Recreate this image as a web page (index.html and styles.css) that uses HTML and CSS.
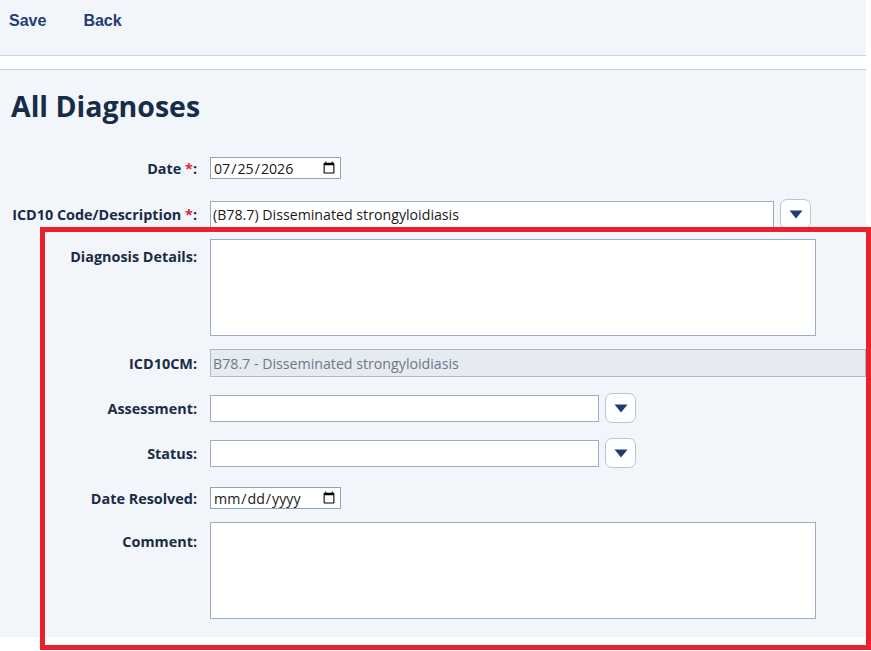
FILE: index.html
```html
<!DOCTYPE html>
<html lang="en">
<head>
    <meta charset="UTF-8">
    <meta name="viewport" content="width=device-width, initial-scale=1.0">
    <title>All Diagnoses</title>
    <link rel="stylesheet" href="styles.css">
</head>
<body>
    <div class="page">
        <div class="toolbar">
            <a class="tool-link" href="#">Save</a>
            <a class="tool-link" href="#">Back</a>
        </div>
        <div class="strip"></div>
        <div class="content">
            <h1 class="title">All Diagnoses</h1>
            <div class="form">
                <div class="row row-date">
                    <label class="label">Date <span class="req">*</span>:</label>
                    <input class="date-input" type="date" value="2026-07-25">
                </div>
                <div class="row row-code">
                    <label class="label">ICD10 Code/Description <span class="req">*</span>:</label>
                    <input class="text-input code-input" type="text" value="(B78.7) Disseminated strongyloidiasis">
                    <button class="drop-btn"><svg width="14" height="9" viewBox="0 0 14 9"><path d="M0.5 0.5 H13.5 L7 8.5 Z" fill="#1f3c73"/></svg></button>
                </div>
                <div class="row row-details">
                    <label class="label label-top">Diagnosis Details:</label>
                    <textarea class="text-area"></textarea>
                </div>
                <div class="row row-icd">
                    <label class="label">ICD10CM:</label>
                    <input class="text-input icd-input" type="text" value="B78.7 - Disseminated strongyloidiasis" disabled>
                </div>
                <div class="row row-assess">
                    <label class="label">Assessment:</label>
                    <input class="text-input short-input" type="text">
                    <button class="drop-btn"><svg width="14" height="9" viewBox="0 0 14 9"><path d="M0.5 0.5 H13.5 L7 8.5 Z" fill="#1f3c73"/></svg></button>
                </div>
                <div class="row row-status">
                    <label class="label">Status:</label>
                    <input class="text-input short-input" type="text">
                    <button class="drop-btn"><svg width="14" height="9" viewBox="0 0 14 9"><path d="M0.5 0.5 H13.5 L7 8.5 Z" fill="#1f3c73"/></svg></button>
                </div>
                <div class="row row-resolved">
                    <label class="label">Date Resolved:</label>
                    <input class="date-input" type="date">
                </div>
                <div class="row row-comment">
                    <label class="label label-top">Comment:</label>
                    <textarea class="text-area"></textarea>
                </div>
            </div>
        </div>
    </div>
    <!-- highlight frame around the detail fields -->
    <div class="highlight"></div>
</body>
</html>
```

FILE: styles.css
```css
*{
    margin: 0px;
    padding: 0px;
    box-sizing: border-box;
}
body{
    background: #ffffff;
    font-family: "Open Sans", "Noto Sans", sans-serif;
    color: #1a2b44;
}
.page{
    width: 866px;
}
.toolbar{
    height: 56px;
    background: #f2f6fb;
    border-bottom: 1px solid #c9d3de;
    display: flex;
    gap: 37px;
    padding: 12px 0px 0px 9px;
}
.tool-link{
    font-family: "Liberation Sans", Arial, sans-serif;
    font-weight: bold;
    font-size: 16px;
    color: #1f3d78;
    text-decoration: none;
}
.strip{
    height: 14px;
    background: #ffffff;
    border-bottom: 1px solid #c9d3de;
}
.content{
    background: #f2f6fb;
    height: 567px;
    padding-top: 18px;
}
.title{
    font-size: 28.5px;
    font-weight: 700;
    color: #172c47;
    padding-left: 11px;
    line-height: 36px;
    margin-bottom: 33px;
}
.row{
    display: flex;
    align-items: center;
    gap: 13px;
}
.label{
    width: 197px;
    flex-shrink: 0;
    text-align: right;
    font-size: 14.4px;
    font-weight: 700;
    color: #1a2b44;
    white-space: nowrap;
}
.label-top{
    align-self: flex-start;
    padding-top: 8px;
}
.row-comment .label-top{
    padding-top: 10px;
}
.req{
    color: #e8213a;
}
.date-input{
    width: 131px;
    height: 22px;
    border: 1px solid #8fa4bd;
    background: #ffffff;
    font-family: "Open Sans", "Noto Sans", sans-serif;
    font-size: 14.2px;
    color: #1a1a1a;
    padding: 0px 2px;
}
.text-input{
    height: 27px;
    border: 1px solid #9aadc3;
    background: #ffffff;
    font-family: "Open Sans", "Noto Sans", sans-serif;
    font-size: 14.2px;
    color: #1a1a1a;
    padding: 0px 2px;
}
.code-input{
    width: 564px;
}
.short-input{
    width: 389px;
}
.icd-input{
    width: 656px;
    height: 28px;
    background: #e6ebf2;
    border: 1px solid #aab8c8;
    color: #6d7886;
}
.text-area{
    width: 606px;
    height: 97px;
    border: 1px solid #9aadc3;
    background: #ffffff;
    resize: none;
}
.drop-btn{
    width: 31px;
    height: 30px;
    border: 1px solid #b7c5d6;
    border-radius: 7px;
    background: #ffffff;
    display: flex;
    align-items: center;
    justify-content: center;
    margin-left: -7px;
}
.row-code{
    margin-top: 20px;
}
.row-details{
    margin-top: 10px;
}
.row-icd{
    margin-top: 13px;
}
.row-assess{
    margin-top: 16px;
}
.row-status{
    margin-top: 15px;
}
.row-resolved{
    margin-top: 19px;
}
.row-comment{
    margin-top: 13px;
}
.highlight{
    position: absolute;
    left: 40px;
    top: 227px;
    width: 831px;
    height: 423px;
    border: 5px solid #e8222a;
    pointer-events: none;
}
```
